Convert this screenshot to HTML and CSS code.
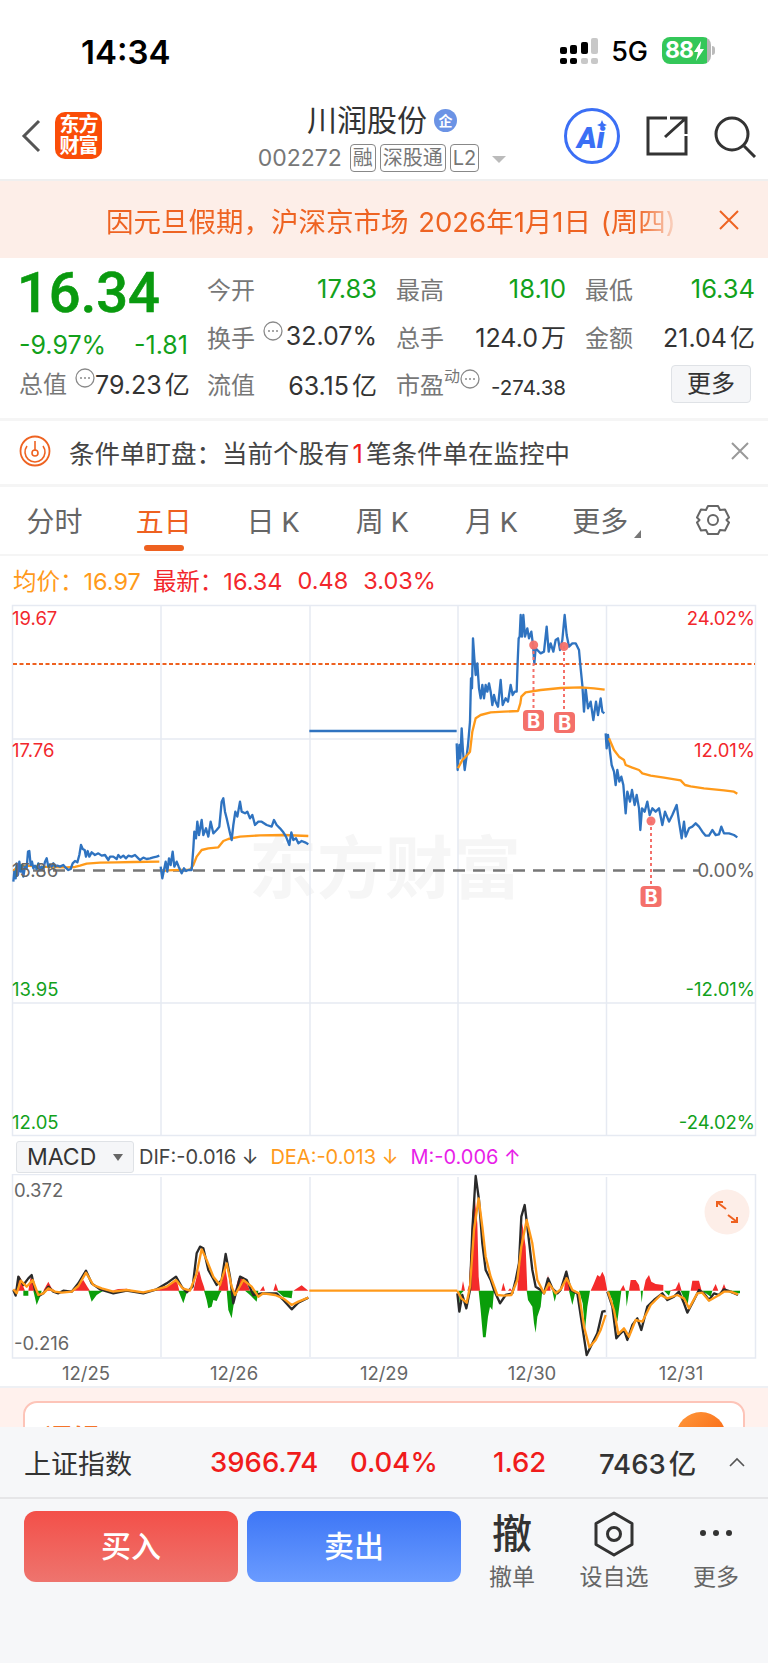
FILE: index.html
```html
<!DOCTYPE html>
<html lang="zh-CN">
<head>
    <meta charset="UTF-8">
    <meta name="viewport" content="width=device-width, initial-scale=1.0">
    <title>川润股份 002272</title>
    <link rel="stylesheet" href="styles.css">
</head>
<body>
<svg class="defs" width="0" height="0">
    <symbol id="tip" viewBox="0 0 20 20">
        <circle cx="10" cy="10" r="9" fill="none" stroke="#8a8a8a" stroke-width="1.3"/>
        <circle cx="6" cy="10" r="1" fill="#8a8a8a"/>
        <circle cx="10" cy="10" r="1" fill="#8a8a8a"/>
        <circle cx="14" cy="10" r="1" fill="#8a8a8a"/>
    </symbol>
</svg>
<div class="page">
    <div class="status-bar">
        <span class="time">14:34</span>
        <svg class="signal" width="38" height="26" viewBox="0 0 38 26">
            <rect x="0" y="9" width="7" height="7" rx="2" fill="#000"/>
            <rect x="10" y="7" width="7" height="9" rx="2" fill="#000"/>
            <rect x="21" y="4" width="7" height="12" rx="2" fill="#000"/>
            <rect x="31" y="0" width="7" height="16" rx="2" fill="#c8c8c8"/>
            <rect x="0" y="20" width="7" height="6" rx="2" fill="#000"/>
            <rect x="10" y="20" width="7" height="6" rx="2" fill="#000"/>
            <rect x="21" y="20" width="7" height="6" rx="2" fill="#c8c8c8"/>
            <rect x="31" y="20" width="7" height="6" rx="2" fill="#c8c8c8"/>
        </svg>
        <span class="network">5G</span>
        <div class="battery">
            <span class="battery-num">88</span>
            <svg class="battery-bolt" width="12" height="20" viewBox="0 0 12 20"><path d="M8 0 1 11h4l-2 9 8-12H7z" fill="#fff"/></svg>
        </div>
        <span class="battery-tip"></span>
    </div>

    <div class="nav">
        <svg class="back" width="20" height="34" viewBox="0 0 20 34"><path d="M18 2 3 17l15 15" fill="none" stroke="#555" stroke-width="3"/></svg>
        <div class="logo"><span>东方</span><span>财富</span></div>
        <div class="nav-center">
            <div class="stock-name">川润股份<span class="qi">企</span></div>
            <div class="stock-sub">
                <span class="stock-code">002272</span>
                <span class="tag">融</span>
                <span class="tag">深股通</span>
                <span class="tag">L2</span>
                <span class="tag-arrow"></span>
            </div>
        </div>
        <div class="nav-right">
            <svg width="58" height="58" viewBox="0 0 58 58">
                <circle cx="29" cy="29" r="26.5" fill="none" stroke="#3b6ff5" stroke-width="3"/>
                <text x="14" y="41" class="ai-text">Ai</text>
                <path d="M39 13l1.500 3.500 3.500 1.500-3.500 1.500-1.500 3.500-1.500-3.500-3.500-1.500 3.500-1.500z" fill="#3b6ff5"/>
            </svg>
            <svg class="nav-icon" width="42" height="40" viewBox="0 0 42 40">
                <path d="M21 2H2v36h38V20M19 21 40 2M24 2h16v16" fill="none" stroke="#333" stroke-width="3"/>
            </svg>
            <svg class="nav-icon" width="44" height="42" viewBox="0 0 44 42">
                <circle cx="19" cy="18" r="16" fill="none" stroke="#333" stroke-width="3"/>
                <path d="M31 30 42 41" stroke="#333" stroke-width="3"/>
            </svg>
        </div>
    </div>

    <div class="banner">
        <div class="banner-text">因元旦假期，沪深京市场 2026年1月1日 (周四)</div>
        <svg class="banner-close" width="20" height="20" viewBox="0 0 20 20"><path d="M1 1l18 18M19 1 1 19" stroke="#ee6322" stroke-width="2"/></svg>
    </div>

    <div class="quote">
        <div class="quote-left">
            <div class="price">16.34</div>
            <div class="change"><span>-9.97%</span><span>-1.81</span></div>
            <div class="cell">
                <span class="label">总值</span>
                <svg class="tip" width="20" height="20"><use href="#tip"/></svg>
                <span class="val">79.23<span class="unit">亿</span></span>
            </div>
        </div>
        <div class="quote-grid">
            <div class="cell"><span class="label">今开</span><span class="val green">17.83</span></div>
            <div class="cell"><span class="label">最高</span><span class="val green">18.10</span></div>
            <div class="cell"><span class="label">最低</span><span class="val green">16.34</span></div>
            <div class="cell">
                <span class="label">换手</span>
                <svg class="tip" width="20" height="20"><use href="#tip"/></svg>
                <span class="val">32.07%</span>
            </div>
            <div class="cell"><span class="label">总手</span><span class="val">124.0<span class="unit">万</span></span></div>
            <div class="cell"><span class="label">金额</span><span class="val">21.04<span class="unit">亿</span></span></div>
            <div class="cell"><span class="label">流值</span><span class="val">63.15<span class="unit">亿</span></span></div>
            <div class="cell">
                <span class="label">市盈</span><sup class="dyn">动</sup>
                <svg class="tip" width="20" height="20"><use href="#tip"/></svg>
                <span class="val small">-274.38</span>
            </div>
            <div class="cell cell-more"><span class="more-btn">更多</span></div>
        </div>
    </div>

    <div class="alert">
        <svg width="32" height="32" viewBox="0 0 32 32">
            <circle cx="16" cy="16" r="14.5" fill="none" stroke="#ee6322" stroke-width="1.8"/>
            <path d="M8 11a10 10 0 1 0 16 0" fill="none" stroke="#ee6322" stroke-width="1.6"/>
            <circle cx="16" cy="18" r="3" fill="none" stroke="#ee6322" stroke-width="1.6"/>
            <path d="M16 6v10" stroke="#ee6322" stroke-width="1.6"/>
        </svg>
        <div class="alert-text">条件单盯盘：当前个股有<em>1</em>笔条件单在监控中</div>
        <svg class="alert-close" width="18" height="18" viewBox="0 0 18 18"><path d="M1 1l16 16M17 1 1 17" stroke="#999" stroke-width="2"/></svg>
    </div>

    <div class="tabs">
        <div class="tab">分时</div>
        <div class="tab active">五日</div>
        <div class="tab">日 K</div>
        <div class="tab">周 K</div>
        <div class="tab">月 K</div>
        <div class="tab tab-more">更多<span class="tab-arrow"></span></div>
        <div class="tab">
            <svg width="34" height="32" viewBox="0 0 34 32">
                <path d="M12 2h10l2 4 5-.5 4 8-2.500 2.500 2.500 2.500-4 8-5-.5-2 4H12l-2-4-5 .5-4-8L3.500 16 1 13.500l4-8 5 .5z" fill="none" stroke="#666" stroke-width="2" stroke-linejoin="round"/>
                <circle cx="17" cy="16" r="5" fill="none" stroke="#666" stroke-width="2"/>
            </svg>
        </div>
    </div>

    <div class="info-line">
        <span class="orange">均价：16.97</span>
        <span class="red first-red">最新：16.34</span>
        <span class="red">0.48</span>
        <span class="red">3.03%</span>
    </div>

    <svg class="chart" width="768" height="538" viewBox="0 600 768 538">
        <text x="385" y="893" class="watermark" text-anchor="middle">东方财富</text>
        <g class="grid-line">
            <rect x="12.500" y="605.500" width="743" height="530" fill="none"/>
            <path d="M161 606V1135M310 606V1135M458 606V1135M606.500 606V1135M12 739H756M12 1003H756"/>
        </g>
        <path class="ref-line" d="M13 664H755"/>
        <path class="zero-line" d="M13 870.500H700"/>

        <text x="12" y="625" class="axis red-fill">19.67</text>
        <text x="12" y="757" class="axis red-fill">17.76</text>
        <text x="12" y="996" class="axis green-fill">13.95</text>
        <text x="12" y="1129" class="axis green-fill">12.05</text>
        <text x="755" y="625" class="axis red-fill" text-anchor="end">24.02%</text>
        <text x="755" y="757" class="axis red-fill" text-anchor="end">12.01%</text>
        <text x="755" y="877" class="axis grey-fill" text-anchor="end">0.00%</text>
        <text x="755" y="996" class="axis green-fill" text-anchor="end">-12.01%</text>
        <text x="755" y="1129" class="axis green-fill" text-anchor="end">-24.02%</text>

        <g transform="translate(0 595) scale(.33333)">
            <polyline class="avg" points="40,828 50,818 60,815 80,812 120,815 160,816 200,817 225,816 240,812 260,806 300,803 350,802 400,801 478,800"/>
            <polyline class="avg" points="482,830 500,826 570,824 580,810 590,785 605,765 625,760 655,757 670,738 685,732 720,725 780,721 850,720 925,723"/>
            <polyline class="px" points="40,860 43,830 47,850 50,805 54,840 58,800 62,830 66,810 70,845 75,815 80,820 84,770 88,768 92,810 96,800 100,820 105,812 110,822 115,805 120,825 125,815 130,822 135,800 140,790 145,815 150,808 155,815 160,805 165,815 172,812 180,815 190,810 197,818 205,825 212,822 218,805 225,798 232,802 238,780 243,750 248,762 254,765 258,785 263,768 268,785 275,772 285,780 295,775 305,782 315,780 325,795 330,785 340,785 350,792 355,780 362,788 370,782 378,790 385,782 395,785 405,780 415,790 420,795 430,788 440,792 450,790 460,787 470,785 478,782"/>
            <polyline class="px" points="482,815 487,850 492,825 497,800 502,830 507,790 512,810 518,770 523,815 530,800 536,815 545,835 552,820 558,828 565,825 575,825 580,760 583,710 588,730 592,680 597,720 605,675 610,720 618,700 625,725 632,680 640,715 650,705 658,695 665,620 670,610 675,650 680,670 690,715 695,735 700,690 706,650 712,665 720,620 725,650 735,655 742,650 750,670 757,660 765,690 775,680 785,680 800,690 815,695 822,675 830,690 840,700 850,712 858,725 868,750 874,712 880,735 888,730 895,745 905,738 915,742 925,748"/>
            <path class="px" d="M928 408H1370"/>
        </g>
        <text x="12" y="877" class="axis grey-fill">15.86</text>
        <g transform="translate(384 595) scale(.33333)">
            <polyline class="px" points="218,445 221,525 226,450 229,490 233,400 237,470 242,525 247,490 252,450 258,380 261,250 264,280 267,130 271,190 275,240 280,205 285,280 290,310 295,270 300,310 305,270 310,290 315,265 320,290 325,330 330,300 335,320 342,335 350,255 356,330 365,310 372,320 380,270 386,300 392,290 398,290 401,200 404,130 407,125 410,60 414,125 418,60 423,125 430,100 435,130 442,110 447,150 451,205 455,160 460,165 470,175 480,170 488,95 494,170 500,145 508,170 515,135 522,130 528,165 535,135 542,60 548,120 555,155 565,145 575,145 585,165 590,220 595,270 600,350 605,280 612,340 620,320 628,375 636,320 642,360 650,310 655,350 661,355"/>
            <polyline class="avg" points="222,520 235,495 250,480 258,470 265,410 275,370 290,360 320,352 360,350 402,348 409,325 412,305 425,292 470,285 530,279 590,277 630,280 662,284"/>
            <polyline class="px" points="665,415 668,460 672,420 678,470 683,510 690,530 695,570 700,525 706,560 712,545 718,570 725,655 730,590 738,620 744,585 752,630 758,600 765,640 769,705 774,640 782,650 790,620 797,660 805,640 815,650 825,640 835,690 843,650 855,680 865,660 878,630 885,680 893,730 900,680 905,725 915,700 925,695 935,685 945,695 955,710 965,722 975,722 985,705 995,720 1005,718 1012,695 1020,715 1035,715 1050,720 1060,727"/>
            <polyline class="avg" points="675,430 690,465 705,485 720,495 725,510 745,518 765,525 775,535 800,542 840,548 890,556 903,570 920,574 960,580 1020,586 1050,590 1060,596"/>
        </g>

        <g class="trade">
            <path class="trade-line" d="M533.500 645V710M564 646V712M651 821V886"/>
            <circle cx="533.700" cy="645" r="4.500"/>
            <circle cx="564" cy="646.500" r="4.500"/>
            <circle cx="651" cy="821" r="4.500"/>
            <rect x="523" y="710" width="21" height="21" rx="4"/>
            <rect x="554" y="712" width="21" height="21" rx="4"/>
            <rect x="640.500" y="886" width="21" height="21" rx="4"/>
            <text x="533.500" y="728" class="b-text" text-anchor="middle">B</text>
            <text x="564.500" y="730" class="b-text" text-anchor="middle">B</text>
            <text x="651" y="904" class="b-text" text-anchor="middle">B</text>
        </g>
    </svg>

    <div class="macd-row">
        <div class="macd-select">MACD<span class="select-arrow"></span></div>
        <span class="dif">DIF:-0.016 ↓</span>
        <span class="dea">DEA:-0.013 ↓</span>
        <span class="m">M:-0.006 ↑</span>
    </div>

    <svg class="macd" width="768" height="212" viewBox="0 1174 768 212">
        <g class="grid-line">
            <rect x="12.500" y="1174.500" width="743" height="183.500" fill="none"/>
            <path d="M161 1177V1357M310 1177V1357M458 1177V1357M606.500 1177V1357"/>
        </g>
        <g transform="translate(0 1130) scale(.33333)">
            <path class="bar-up" d="M45 482 52 465 58 438 64 450 70 470 75 482zM85 482 92 440 100 455 106 482zM130 482 145 455 155 475 165 482zM215 482 235 465 250 450 262 470 270 482zM335 482 355 477 380 476 400 482zM465 482 500 470 530 450 538 482zM580 482 590 440 597 420 605 450 612 470 615 482zM655 482 665 440 675 410 682 450 685 482zM705 482 715 445 730 440 745 470 750 482zM780 482 790 468 795 482zM820 482 827 460 835 482zM880 482 905 466 925 482z"/>
            <path class="bar-down" d="M70 482H85V497H70zM100 482 110 525 120 500 125 482zM265 482 275 515 290 495 310 482zM535 482 550 520 562 482zM612 482 620 510 625 535 635 530 640 510 650 513 660 490 665 482zM680 482 685 540 695 565 700 530 705 500 712 482zM735 482 750 495 770 515 775 482zM830 482 850 500 875 505 878 482z"/>
            <polyline class="dif-line" points="40,480 47,497 55,440 70,465 85,445 95,435 105,480 118,497 130,490 145,470 160,485 175,490 190,482 215,485 235,460 258,422 275,460 300,478 340,490 380,482 430,490 470,478 500,460 528,440 545,470 560,487 578,470 590,370 600,350 610,355 625,420 650,465 665,450 677,372 690,440 700,520 720,440 740,450 760,495 785,490 830,490 850,510 875,538 895,518 925,503"/>
            <polyline class="avg" points="40,478 50,490 62,452 80,470 98,450 115,495 130,490 145,475 165,485 185,488 215,485 235,468 258,428 280,465 305,475 340,485 380,480 430,487 470,478 500,470 528,450 548,475 570,482 590,430 605,358 620,390 640,440 660,465 680,400 695,470 705,495 730,450 755,470 775,500 790,490 825,495 850,505 875,525 895,515 925,503"/>
            <path class="avg" d="M928 482H1372"/>
        </g>
        <g transform="translate(384 1130) scale(.33333)">
            <path class="bar-up" d="M232 482 237 453 243 482zM250 482 255 465 262 330 265 250 272 200 280 280 284 440 288 482zM352 482 358 458 365 482zM372 482 378 475 385 482zM400 482 405 400 415 280 425 350 430 482zM485 482 492 435 500 482zM540 482 547 420 560 482zM620 482 630 460 640 435 648 440 655 425 662 440 670 482zM708 482 718 465 725 482zM735 482 740 450 755 450 765 465 768 482zM778 482 785 450 795 435 802 455 815 462 838 465V482zM855 482 875 476 885 455 893 482zM920 482 925 452 945 452 953 482zM985 482 995 462 1003 482zM1012 482 1020 462 1028 482z"/>
            <path class="bar-down" d="M225 482 228 550 232 490 240 482zM284 482 290 540 297 622H305L312 560 318 530 325 540 330 482zM428 482 432 510 445 530 450 580 455 608 460 560 470 530 475 482zM505 482 512 515 520 482zM555 482 565 525 575 482zM585 482 596 520 603 600 610 530 618 482zM672 482 685 510 690 540 700 575 712 482zM725 482 728 530 735 482zM770 482 773 518 777 482zM840 482 855 497 860 482zM890 482 910 530 917 482zM955 482 980 500 985 482zM1040 482H1068V490H1040z"/>
            <polyline class="dif-line" points="220,490 226,545 235,495 247,535 258,480 265,300 275,138 285,210 295,340 305,420 320,450 330,480 348,520 365,495 385,490 395,450 405,400 412,260 422,225 430,290 445,420 455,470 470,480 480,490 492,445 505,475 520,490 530,480 547,425 560,480 580,490 595,590 608,675 620,650 640,610 655,545 665,543"/>
            <polyline class="dif-line" points="670,485 685,530 697,625 710,610 720,600 730,630 745,585 760,565 772,600 790,530 810,510 835,490 850,510 870,500 885,485 900,520 910,548 930,510 945,480 960,490 975,510 990,490 1005,495 1020,478 1040,485 1062,495"/>
            <polyline class="avg" points="220,482 232,505 248,518 258,470 270,300 284,205 295,290 305,380 320,440 340,495 360,497 382,495 400,450 412,350 428,270 445,340 460,450 480,490 495,460 515,490 530,478 548,445 565,480 585,490 600,590 616,652 635,630 650,600 665,555"/>
            <polyline class="avg" points="672,485 690,540 703,612 720,595 735,620 755,570 775,575 800,525 830,495 850,505 880,495 900,505 915,535 940,490 955,488 975,512 1000,498 1020,485 1040,485 1062,493"/>
        </g>
        <text x="14" y="1197" class="axis grey-fill">0.372</text>
        <text x="14" y="1350" class="axis grey-fill">-0.216</text>
        <circle cx="727" cy="1212" r="22.500" fill="#fdeee8"/>
        <path d="M717 1207V1202H723M717.500 1202.500 726 1209M737 1217V1222H731M736.500 1221.500 728 1215" fill="none" stroke="#ee6120" stroke-width="2"/>
        <text x="86" y="1380" class="axis grey-fill" text-anchor="middle">12/25</text>
        <text x="234" y="1380" class="axis grey-fill" text-anchor="middle">12/26</text>
        <text x="384" y="1380" class="axis grey-fill" text-anchor="middle">12/29</text>
        <text x="532" y="1380" class="axis grey-fill" text-anchor="middle">12/30</text>
        <text x="681" y="1380" class="axis grey-fill" text-anchor="middle">12/31</text>
    </svg>

    <div class="promo">
        <div class="promo-card">
            <span class="promo-title">逻辑</span>
            <span class="promo-ball"></span>
        </div>
    </div>

    <div class="bottom">
        <div class="index-row">
            <span class="index-name">上证指数</span>
            <span class="index-num w1">3966.74</span>
            <span class="index-num w2">0.04%</span>
            <span class="index-num w3">1.62</span>
            <span class="index-vol">7463<span class="unit">亿</span></span>
            <svg width="16" height="10" viewBox="0 0 16 10"><path d="M1 9l7-7 7 7" fill="none" stroke="#555" stroke-width="1.600"/></svg>
        </div>
        <div class="actions">
            <div class="trade-btn buy">买入</div>
            <div class="trade-btn sell">卖出</div>
            <div class="action a-cancel">
                <span class="cancel-glyph">撤</span>
                <span class="action-label">撤单</span>
            </div>
            <div class="action a-fav">
                <svg width="42" height="46" viewBox="0 0 42 46">
                    <path d="M21 2 39 12.500V33.500L21 44 3 33.500V12.500z" fill="none" stroke="#333" stroke-width="3" stroke-linejoin="round"/>
                    <circle cx="21" cy="23" r="6.500" fill="none" stroke="#333" stroke-width="3"/>
                </svg>
                <span class="action-label">设自选</span>
            </div>
            <div class="action a-more">
                <svg width="34" height="46" viewBox="0 0 34 46">
                    <circle cx="4" cy="22" r="3" fill="#333"/>
                    <circle cx="17" cy="22" r="3" fill="#333"/>
                    <circle cx="30" cy="22" r="3" fill="#333"/>
                </svg>
                <span class="action-label">更多</span>
            </div>
        </div>
    </div>
</div>
</body>
</html>
```

FILE: styles.css
```css
* {
    box-sizing: border-box;
}

body {
    margin: 0;
    background: #fff;
    font-family: Inter, "Noto Sans CJK SC", sans-serif;
    color: #333;
}

.defs {
    position: absolute;
}

.page {
    width: 768px;
    height: 1663px;
    overflow: hidden;
    display: flex;
    flex-direction: column;
}

/* status bar */
.status-bar {
    height: 90px;
    flex-shrink: 0;
    display: flex;
    align-items: flex-start;
    padding: 0 53px 0 81px;
}

.time {
    font-size: 33px;
    font-weight: 600;
    line-height: 40px;
    margin-top: 32px;
    color: #000;
}

.signal {
    margin: 38px 0 0 auto;
}

.network {
    font-size: 27px;
    font-weight: 500;
    line-height: 30px;
    margin: 37px 0 0 13px;
    color: #000;
}

.battery {
    width: 49px;
    height: 27px;
    margin: 37px 0 0 14px;
    border-radius: 8px;
    background: linear-gradient(90deg, #34c759 0 92%, #b5b5b5 92%);
    display: flex;
    align-items: center;
    padding-left: 3px;
}

.battery-num {
    font-size: 23px;
    font-weight: 700;
    line-height: 27px;
    color: #fff;
    letter-spacing: -1px;
}

.battery-tip {
    width: 3px;
    height: 9px;
    margin: 46px 0 0 1px;
    background: #bbb;
    border-radius: 0 3px 3px 0;
}

/* nav */
.nav {
    height: 89px;
    flex-shrink: 0;
    display: flex;
    padding: 0 11px 0 21px;
}

.back {
    margin-top: 29px;
}

.logo {
    width: 47px;
    height: 47px;
    margin: 22px 0 0 14px;
    background: #fa4d08;
    border-radius: 10px;
    color: #fff;
    font-size: 20px;
    font-weight: 700;
    line-height: 21px;
    display: flex;
    flex-direction: column;
    align-items: center;
    justify-content: center;
    letter-spacing: -1px;
}

.nav-center {
    width: 244px;
    margin-left: 158px;
    display: flex;
    flex-direction: column;
    align-items: center;
}

.stock-name {
    font-size: 30px;
    line-height: 34px;
    margin-top: 13px;
    color: #333;
    display: flex;
    align-items: center;
    gap: 7px;
    white-space: nowrap;
}

.qi {
    width: 23px;
    height: 23px;
    border-radius: 50%;
    background: #6b93e5;
    color: #fff;
    font-size: 14px;
    font-weight: 700;
    line-height: 23px;
    text-align: center;
}

.stock-sub {
    display: flex;
    align-items: center;
    margin-top: 7px;
    gap: 4px;
    white-space: nowrap;
}

.stock-code {
    font-size: 23px;
    line-height: 28px;
    color: #777;
    margin-right: 4px;
}

.tag {
    height: 28px;
    padding: 0 2px;
    border: 1px solid #888;
    border-radius: 4px;
    font-size: 20px;
    line-height: 26px;
    color: #777;
}

.tag-arrow {
    width: 0;
    height: 0;
    margin: 2px 0 0 9px;
    border-left: 7px solid transparent;
    border-right: 7px solid transparent;
    border-top: 7px solid #bbb;
}

.ai-text {
    font-family: Roboto, sans-serif;
    font-size: 30px;
    font-weight: 900;
    font-style: italic;
    fill: #3b6ff5;
}

.nav-right {
    margin-left: auto;
    display: flex;
    align-items: flex-start;
    padding-top: 17px;
    gap: 25px;
}

.nav-icon {
    margin-top: 9px;
}

/* banner */
.banner {
    height: 79px;
    flex-shrink: 0;
    background: #fdeee8;
    border-top: 2px solid #efefef;
    display: flex;
    align-items: center;
    padding: 0 29px 0 106px;
}

.banner-text {
    width: 577px;
    overflow: hidden;
    white-space: nowrap;
    font-size: 27.500px;
    word-spacing: 2px;
    color: #ee6322;
    -webkit-mask-image: linear-gradient(90deg, #000 92%, transparent 100%);
    mask-image: linear-gradient(90deg, #000 92%, transparent 100%);
}

.banner-close {
    margin-left: auto;
}

/* quote */
.quote {
    height: 160px;
    flex-shrink: 0;
    display: flex;
    padding: 7px 13px 0 19px;
}

.quote-left {
    width: 169px;
    margin-right: 19px;
}

.price {
    font-family: Roboto, sans-serif;
    font-size: 56px;
    font-weight: 500;
    line-height: 56px;
    color: #0a9a0f;
    margin-left: -2px;
    -webkit-text-stroke: .6px #0a9a0f;
}

.change {
    display: flex;
    justify-content: space-between;
    font-size: 25px;
    line-height: 30px;
    margin-top: 9px;
    color: #12a11b;
}

.quote-grid {
    flex: 1;
    display: grid;
    grid-template-columns: 170px 170px 170px;
    grid-template-rows: 47.500px 47.500px 47.500px;
    column-gap: 19px;
}

.cell {
    display: flex;
    align-items: center;
    height: 47.500px;
    white-space: nowrap;
}

.quote-left .cell {
    margin-top: -1px;
}

.label {
    font-size: 24px;
    color: #777;
}

.val {
    margin-left: auto;
    font-size: 25px;
    color: #333;
}

.unit {
    margin-left: 3px;
}

.val.green {
    color: #12a11b;
    font-size: 25.500px;
}

.val.small {
    font-size: 20.500px;
    margin-top: 8px;
}

.tip {
    margin: 0 0 10px 8px;
    flex-shrink: 0;
}

.dyn {
    font-size: 16px;
    line-height: 16px;
    color: #777;
    margin-bottom: 16px;
    vertical-align: baseline;
}

.dyn + .tip {
    margin-left: 0;
}

.cell-more {
    justify-content: flex-end;
}

.more-btn {
    width: 80px;
    height: 38px;
    margin-right: 4px;
    background: #f5f6f8;
    border: 1px solid #dfe2e6;
    border-radius: 4px;
    font-size: 24px;
    line-height: 36px;
    text-align: center;
    color: #333;
}

/* alert */
.alert {
    height: 69px;
    flex-shrink: 0;
    border-top: 3px solid #f5f5f5;
    border-bottom: 3px solid #f5f5f5;
    display: flex;
    align-items: center;
    padding: 0 19px 3px 19px;
}

.alert-text {
    margin-left: 18px;
    font-size: 25.500px;
    color: #444;
    white-space: nowrap;
}

.alert-text em {
    font-style: normal;
    color: #f01c1c;
    margin: 0 3px;
}

.alert-close {
    margin-left: auto;
}

/* tabs */
.tabs {
    height: 69px;
    flex-shrink: 0;
    border-bottom: 2px solid #f5f5f5;
    display: flex;
    font-family: Roboto, "Noto Sans CJK SC", sans-serif;
}

.tab {
    position: relative;
    flex: 1;
    display: flex;
    align-items: center;
    justify-content: center;
    padding-bottom: 2px;
    font-size: 28px;
    color: #666;
    white-space: nowrap;
}

.tab.active {
    color: #ee6120;
}

.tab.active::after {
    content: "";
    position: absolute;
    left: 35px;
    bottom: 3px;
    width: 40px;
    height: 6px;
    border-radius: 3px;
    background: #ee6120;
}

.tab-more {
    padding-right: 4px;
}

.tab-arrow {
    position: absolute;
    right: 18px;
    top: 43px;
    width: 0;
    height: 0;
    border-left: 7px solid transparent;
    border-bottom: 8px solid #777;
}

/* info line */
.info-line {
    height: 44px;
    flex-shrink: 0;
    display: flex;
    align-items: center;
    padding: 4px 0 0 13px;
    font-size: 23.500px;
    white-space: nowrap;
}

.orange {
    color: #ff9a1a;
}

.red {
    color: #f2272c;
    margin-left: 15px;
}

.first-red {
    margin-left: 12px;
}

/* charts */
.chart,
.macd {
    display: block;
    flex-shrink: 0;
}

.grid-line {
    stroke: #e6eaf2;
    stroke-width: 1.500;
    fill: none;
}

.watermark {
    font-size: 68px;
    font-weight: 700;
    fill: #f6f6f6;
}

.ref-line {
    stroke: #ee6120;
    stroke-width: 2;
    stroke-dasharray: 4 2.500;
    fill: none;
}

.zero-line {
    stroke: #777;
    stroke-width: 2.500;
    stroke-dasharray: 12 8;
    fill: none;
}

.axis {
    font-size: 18.500px;
}

.red-fill {
    fill: #f2272c;
}

.green-fill {
    fill: #12a11b;
}

.grey-fill {
    fill: #666;
}

.px,
.avg,
.dif-line {
    fill: none;
    stroke-linejoin: round;
    stroke-width: 7;
}

.px {
    stroke: #2f73c0;
}

.avg {
    stroke: #ff9a1a;
}

.dif-line {
    stroke: #2a2a2a;
}

.bar-up {
    fill: #f42b2b;
}

.bar-down {
    fill: #0a9e0a;
}

.trade circle,
.trade rect {
    fill: #f4706a;
}

.trade circle {
    opacity: .95;
}

.trade-line {
    stroke: #f4706a;
    stroke-width: 2;
    stroke-dasharray: 3 3;
    fill: none;
}

.b-text {
    font-size: 20px;
    font-weight: 700;
    fill: #fff;
}

.macd-row {
    height: 36px;
    flex-shrink: 0;
    display: flex;
    align-items: center;
    padding: 2px 0 0 16px;
    font-size: 20px;
    white-space: nowrap;
}

.macd-select {
    width: 118px;
    height: 32px;
    display: flex;
    align-items: center;
    padding-left: 10px;
    background: #f5f6f8;
    border: 1px solid #dfe2e6;
    border-radius: 3px;
    font-size: 23px;
    color: #333;
}

.select-arrow {
    width: 0;
    height: 0;
    margin-left: 17px;
    border-left: 5px solid transparent;
    border-right: 5px solid transparent;
    border-top: 7px solid #666;
}

.dif {
    margin-left: 5px;
    color: #444;
}

.dea {
    margin-left: 12px;
    color: #ff9a1a;
}

.m {
    margin-left: 12px;
    color: #e81ee8;
}

/* clipped card above the bottom panel */
.promo {
    height: 41px;
    flex-shrink: 0;
    overflow: hidden;
    background: #fff1ed;
    border-top: 2px solid #eef0f4;
    padding: 13px 23px 0;
}

.promo-card {
    position: relative;
    height: 100px;
    background: #fff;
    border: 2px solid #fdc4b8;
    border-radius: 14px;
}

.promo-title {
    position: absolute;
    left: 19px;
    top: 15px;
    font-size: 28px;
    font-weight: 700;
    color: #f5742a;
}

.promo-ball {
    position: absolute;
    right: 17px;
    top: 9px;
    width: 50px;
    height: 50px;
    border-radius: 50%;
    background: linear-gradient(135deg, #ff9a3d, #f75a08);
}

/* bottom panel */
.bottom {
    flex: 1;
    background: #f6f7f9;
}

.index-row {
    height: 72px;
    border-bottom: 2px solid #e6e6e8;
    display: flex;
    align-items: center;
    padding-left: 24px;
    white-space: nowrap;
}

.index-name {
    width: 186px;
    font-size: 27px;
    color: #333;
}

.index-num {
    font-size: 27.500px;
    font-weight: 500;
    color: #f01c1c;
}

.w1 {
    width: 140px;
}

.w2 {
    width: 143px;
}

.w3 {
    width: 106px;
}

.index-vol {
    width: 130px;
    font-size: 27.500px;
    font-weight: 500;
    color: #333;
}

.actions {
    display: flex;
    padding: 12px 0 0 24px;
}

.trade-btn {
    width: 214px;
    height: 71px;
    margin-right: 9px;
    border-radius: 12px;
    color: #fff;
    font-size: 30px;
    font-weight: 500;
    line-height: 71px;
    text-align: center;
}

.buy {
    background: linear-gradient(#f35049, #ee746e);
}

.sell {
    background: linear-gradient(#3e77f6, #6a9bff);
}

.action {
    display: flex;
    flex-direction: column;
    align-items: center;
    flex-shrink: 0;
}

.a-cancel {
    width: 60px;
    margin-left: 12px;
}

.a-fav {
    width: 70px;
    margin-left: 37px;
}

.a-more {
    width: 48px;
    margin-left: 43px;
}

.cancel-glyph {
    height: 46px;
    font-size: 40px;
    font-weight: 500;
    line-height: 46px;
    color: #333;
}

.action-label {
    font-size: 23px;
    line-height: 32px;
    margin-top: 4px;
    color: #666;
    white-space: nowrap;
}
```
